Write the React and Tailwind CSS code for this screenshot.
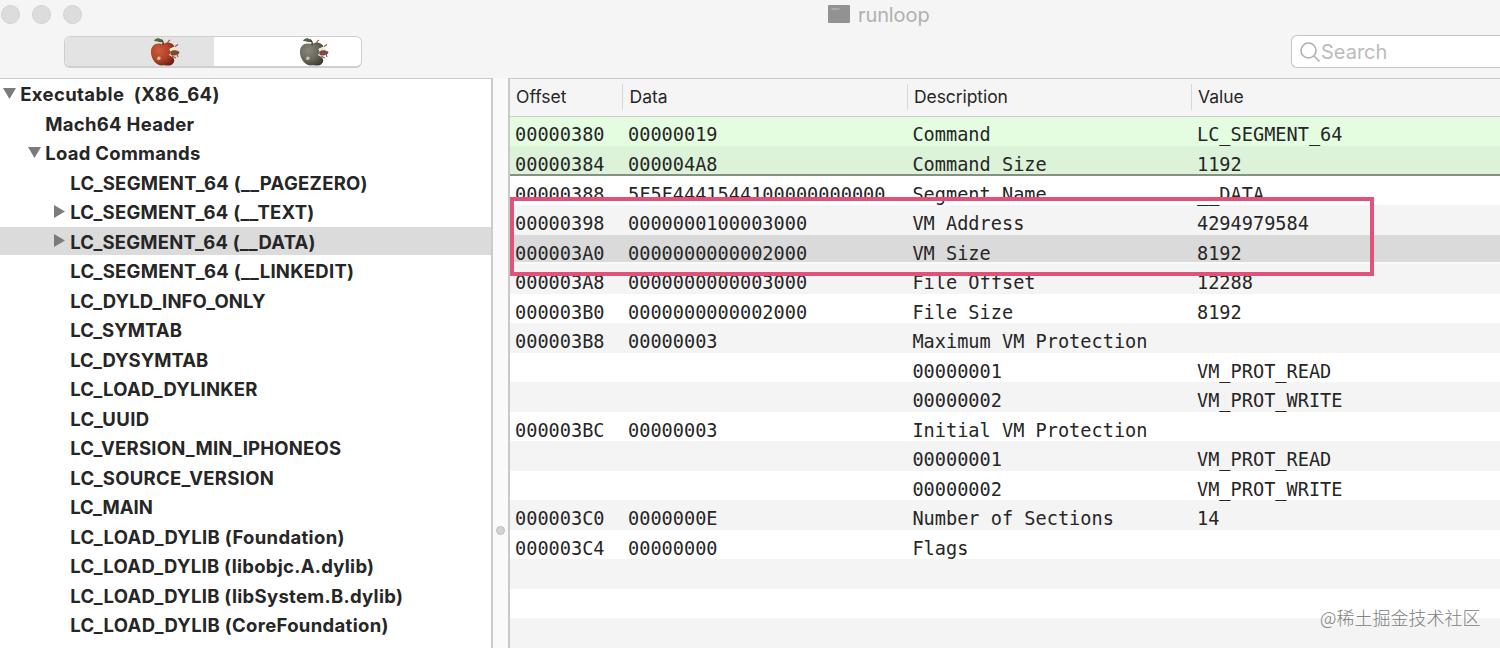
import React from "react";

const tree = [
  { t: "Executable  (X86_64)", level: 0, icon: "down", ls: "tracking-[0.38px]" },
  { t: "Mach64 Header", level: 1, ls: "tracking-[0.3px]" },
  { t: "Load Commands", level: 1, icon: "down", ls: "tracking-[0.27px]" },
  { t: "LC_SEGMENT_64 (__PAGEZERO)", level: 2, ls: "tracking-[0.28px]" },
  { t: "LC_SEGMENT_64 (__TEXT)", level: 2, icon: "right", ls: "tracking-[0.24px]" },
  { t: "LC_SEGMENT_64 (__DATA)", level: 2, icon: "right", selected: true, ls: "tracking-[0.2px]" },
  { t: "LC_SEGMENT_64 (__LINKEDIT)", level: 2, ls: "tracking-[0.27px]" },
  { t: "LC_DYLD_INFO_ONLY", level: 2, ls: "tracking-[0.12px]" },
  { t: "LC_SYMTAB", level: 2, ls: "tracking-[0.05px]" },
  { t: "LC_DYSYMTAB", level: 2, ls: "tracking-[0px]" },
  { t: "LC_LOAD_DYLINKER", level: 2, ls: "tracking-[0.2px]" },
  { t: "LC_UUID", level: 2, ls: "tracking-[0.4px]" },
  { t: "LC_VERSION_MIN_IPHONEOS", level: 2, ls: "tracking-[0.22px]" },
  { t: "LC_SOURCE_VERSION", level: 2, ls: "tracking-[0.3px]" },
  { t: "LC_MAIN", level: 2, ls: "tracking-[0px]" },
  { t: "LC_LOAD_DYLIB (Foundation)", level: 2, ls: "tracking-[0.33px]" },
  { t: "LC_LOAD_DYLIB (libobjc.A.dylib)", level: 2, ls: "tracking-[0.28px]" },
  { t: "LC_LOAD_DYLIB (libSystem.B.dylib)", level: 2, ls: "tracking-[0.3px]" },
  { t: "LC_LOAD_DYLIB (CoreFoundation)", level: 2, ls: "tracking-[0.33px]" },
  { t: "LC_LOAD_DYLIB (UIKit)", level: 2, ls: "tracking-[0.33px]" },
];

const rows = [
  ["00000380", "00000019", "Command", "LC_SEGMENT_64"],
  ["00000384", "000004A8", "Command Size", "1192"],
  ["00000388", "5F5F4441544100000000000", "Segment Name", "__DATA"],
  ["00000398", "0000000100003000", "VM Address", "4294979584"],
  ["000003A0", "0000000000002000", "VM Size", "8192"],
  ["000003A8", "0000000000003000", "File Offset", "12288"],
  ["000003B0", "0000000000002000", "File Size", "8192"],
  ["000003B8", "00000003", "Maximum VM Protection", ""],
  ["", "", "00000001", "VM_PROT_READ"],
  ["", "", "00000002", "VM_PROT_WRITE"],
  ["000003BC", "00000003", "Initial VM Protection", ""],
  ["", "", "00000001", "VM_PROT_READ"],
  ["", "", "00000002", "VM_PROT_WRITE"],
  ["000003C0", "0000000E", "Number of Sections", "14"],
  ["000003C4", "00000000", "Flags", ""],
  ["", "", "", ""],
  ["", "", "", ""],
  ["", "", "", ""],
];

const indent = ["pl-[3px]", "pl-[28px]", "pl-[53px]"];

function rowStyle(i) {
  if (i === 0) return "bg-[#e4fde0]";
  if (i === 1) return "bg-[#ddf3d9] border-b-2 border-[#869184]";
  if (i === 4) return "bg-[#dadada] border-b-2 border-[#fafafa]";
  return i % 2 ? "bg-[#f4f4f4]" : "bg-white";
}

function Arrow({ dir }) {
  return (
    <svg width="13" height="13" viewBox="0 0 13 13" className="shrink-0" fill="#7b7b7b">
      {dir === "down" && <path d="M0 1h13L6.5 12z" />}
      {dir === "right" && <path d="M1 0v13L12 6.5z" />}
    </svg>
  );
}

function Apple({ gray }) {
  const id = gray ? "g" : "r";
  return (
    <svg width="32" height="30" viewBox="0 0 32 30">
      <defs>
        <radialGradient id={id} cx="0.35" cy="0.35" r="0.75">
          <stop offset="0" stopColor={gray ? "#88867a" : "#cf5a3a"} />
          <stop offset="0.55" stopColor={gray ? "#6a685c" : "#b0432a"} />
          <stop offset="1" stopColor={gray ? "#3c3b34" : "#6e1e10"} />
        </radialGradient>
      </defs>
      <path
        fill={`url(#${id})`}
        d="M2 16C1.500 10 5 6.500 9.500 6.500C12 6.500 13 7.500 15 6.500C19 4.500 23.500 6 25.500 9.500L20.500 12L22 15.500L20 18L24 20.500C26.500 23 25 27 21.500 28.300C18 29 17 28 14.500 28.300C8 29.300 2.500 23 2 16Z"
      />
      <path d="M14.500 8C15 5 13.500 3 10.500 1.500C8 0.800 6 2 5 4C8 3.500 10 6 14 4.800Z" fill={gray ? "#53604a" : "#4f6639"} />
      <path d="M14 8C14.500 5.500 13.500 3.500 12 2.500" stroke="#49452b" strokeWidth="1.500" fill="none" />
      <path d="M25.500 9.500L20.500 12L22 15.500L20 18L24 18L28 14Z" fill="#f2e8c8" />
      <path d="M21.500 14.500C24 12.500 28 12.800 30.500 15C30 18 26 19.500 21.500 18Z" fill={gray ? "#7d4a45" : "#7d4a31"} />
      <path d="M18.500 6C19 4.500 19.500 3.500 21 3M26 9.500L29 7.500M23 19L27 21M28 17L29 20" stroke={gray ? "#8b5550" : "#a9452e"} strokeWidth="1.100" fill="none" />
      <path d="M8 21l1.500-1.500 2 .500v2.500l-3 .500z" fill={gray ? "#c9c5ae" : "#f0bf92"} />
    </svg>
  );
}

export default function App() {
  return (
    <div className="relative flex h-[648px] w-[1500px] flex-col overflow-hidden bg-[#f5f5f5] text-[#262626]">
      <header className="flex h-[78px] shrink-0 flex-col">
        <div className="flex h-[30px] items-center">
          <div className="flex w-[828px] gap-[12px] pb-[2px] pl-[1.400px]">
            <span className="size-[19px] rounded-full border border-[#d2d2d2] bg-[#dcdcdc]" />
            <span className="size-[19px] rounded-full border border-[#d2d2d2] bg-[#dcdcdc]" />
            <span className="size-[19px] rounded-full border border-[#d2d2d2] bg-[#dcdcdc]" />
          </div>
          <svg width="22" height="18" viewBox="0 0 22 18" className="mb-[2px]">
            <rect width="22" height="18" rx="1" fill="#929292" />
            <path d="M3.500 4h8" stroke="#d0d0d0" strokeDasharray="2 0.500" />
          </svg>
          <h1 className="pl-[8px] font-['Inter'] text-[20px] leading-[30px] tracking-[-0.1px] text-[#b0b0b0]">runloop</h1>
        </div>
        <div className="flex h-[48px] items-start justify-between pl-[64px] pt-[6px]">
          <div className="flex h-[32px] w-[297.500px] overflow-hidden rounded-[6px] border border-b-2 border-[#cfcfcf] bg-white">
            <div className="flex w-[149px] justify-end bg-[#e3e3e3] pr-[33px]"><Apple /></div>
            <div className="flex flex-1 justify-end pr-[31px]"><Apple gray /></div>
          </div>
          <div className="-mt-px flex h-[33px] w-[209px] items-center rounded-l-[6px] border border-r-0 border-[#c4c4c4] bg-white pl-[7px]">
            <svg width="22" height="22" viewBox="0 0 22 22" fill="none" stroke="#b0b0b0" strokeWidth="1.600">
              <circle cx="9.500" cy="9.500" r="7.500" />
              <path d="M15 15L20.500 20.500" />
            </svg>
            <span className="font-['Inter'] text-[20px] leading-[30px] text-[#bcbcbc]">Search</span>
          </div>
        </div>
      </header>

      <div className="flex min-h-0 flex-1">
        <aside className="w-[493px] shrink-0 overflow-hidden border-r-2 border-t border-[#cbcbcb] bg-white">
          {tree.map((n) => (
            <div key={n.t} className="h-[29.530px]">
              <div className={`flex h-[28.500px] items-center ${indent[n.level]} ${n.selected ? "bg-[#dbdbdb]" : ""}`}>
                <span className="flex w-[17.200px] shrink-0">{n.icon && <Arrow dir={n.icon} />}</span>
                <span className={`whitespace-pre pt-[1.900px] font-['Inter'] text-[18.500px] font-bold leading-[26px] ${n.ls}`}>{n.t}</span>
              </div>
            </div>
          ))}
        </aside>

        <div className="flex w-[15px] shrink-0 items-center justify-center bg-[#fafafa] pt-[334px]">
          <span className="size-[9px] rounded-full border border-[#bdbdbd] bg-[#d2d2d2]" />
        </div>

        <main className="flex min-w-0 flex-1 flex-col overflow-hidden border-l-2 border-t border-[#c9c9c9]">
          <div className="flex h-[37.600px] shrink-0 items-center border-b border-[#c8d0c6] bg-[#f5f5f5] font-['Inter'] text-[17.500px] leading-[26px]">
            <span className="w-[112px] pl-[6px]">Offset</span>
            <span className="w-[284.500px] border-l border-[#d8d8d8] pl-[6.500px]">Data</span>
            <span className="w-[284.500px] border-l border-[#d8d8d8] pl-[6.500px] tracking-[-0.08px]">Description</span>
            <span className="flex-1 border-l border-[#d8d8d8] pl-[6px]">Value</span>
          </div>
          {rows.map((r, i) => (
            <div key={i} className={`h-[29.530px] shrink-0 font-['DejaVu_Sans_Mono'] text-[18.600px] leading-[28px] ${rowStyle(i)}`}>
              <div className="relative flex pl-[5px] pt-[4.900px]">
                <span className="w-[113px]">{r[0]}</span>
                <span className="w-[284.400px]">{r[1]}</span>
                <span className="w-[284.600px]">{r[2]}</span>
                <span>{r[3]}</span>
              </div>
            </div>
          ))}
        </main>
      </div>

      <div className="pointer-events-none absolute left-[510px] top-[197px] h-[79px] w-[864px] border-4 border-[#e0527a]" />
      <div className="absolute left-[1320px] top-[604px] font-['Noto_Sans_CJK_SC'] text-[18px] font-light leading-[26px] text-[#808080]">@稀土掘金技术社区</div>
    </div>
  );
}
